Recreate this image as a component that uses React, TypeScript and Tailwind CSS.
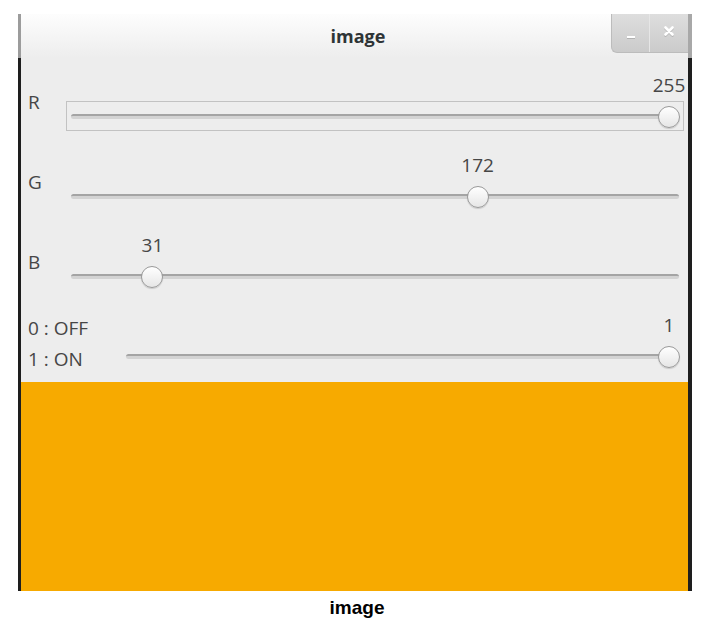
const UI_FONT = { fontFamily: '"Open Sans", "DejaVu Sans", sans-serif' }

type ScaleProps = {
  value: number
  max: number
  boxed?: boolean
}

// GTK-style horizontal scale: value drawn above the knob, track below.
function Scale({ value, max, boxed = false }: ScaleProps) {
  const frac = value / max
  return (
    <div className="flex flex-1 flex-col">
      <div className="relative h-[27px]">
        <span
          className="absolute -top-[1px] -translate-x-1/2 text-[19px] leading-[24px] text-[#464646]"
          style={{ left: `calc(15px + (100% - 30px) * ${frac})` }}
        >
          {value}
        </span>
      </div>
      <div
        className={`flex h-[30px] items-center border px-[4px] ${
          boxed ? 'border-[#c2c2c2]' : 'border-transparent'
        }`}
      >
        <div className="relative h-[5px] w-full rounded-full border-t-2 border-[#a4a4a4] bg-[#d3d3d3]">
          <span
            className="absolute top-1/2 h-[22px] w-[22px] -translate-x-1/2 -translate-y-1/2 rounded-full border border-[#9a9a9a] bg-gradient-to-b from-white to-[#e6e6e6] shadow-[0_1px_1px_rgba(0,0,0,0.15)]"
            style={{ left: `calc(10px + (100% - 20px) * ${frac})` }}
          />
        </div>
      </div>
    </div>
  )
}

function ChannelRow({ label, value }: { label: string; value: number }) {
  return (
    <div className="flex h-[57px] items-center">
      <div className="w-[38px] text-[19px] text-[#464646]">{label}</div>
      <Scale value={value} max={255} boxed={label === 'R'} />
    </div>
  )
}

export default function App() {
  return (
    <div className="min-h-screen bg-white pl-[18px] pt-[14px]">
      <div className="flex w-[674px] flex-col" style={UI_FONT}>
        <div className="grid h-[44px] grid-cols-[1fr_auto_1fr] border-l-[3px] border-r-[4px] border-l-[#9c9c9c] border-r-[#a8a8a8] bg-gradient-to-b from-[#fdfdfd] to-[#ededed]">
          <div />
          <div className="ml-[7px] self-center text-[18px] font-bold text-[#2e3436]">image</div>
          <div className="flex justify-end">
            <div className="flex h-[39px] overflow-hidden rounded-bl-[6px] border-b border-l border-[#bcbcbc] bg-gradient-to-b from-[#dedede] to-[#cbcbcb]">
              <button type="button" className="flex w-[38px] items-center justify-center border-r border-[#e6e6e6] pt-[8px]">
                <span className="h-[2px] w-[8px] bg-white shadow-[0_1px_0_rgba(0,0,0,0.15)]" />
              </button>
              <button type="button" className="flex w-[38px] items-center justify-center pb-[4px]">
                <svg width="10" height="10" viewBox="0 0 10 10" className="drop-shadow-[0_1px_0_rgba(0,0,0,0.15)]">
                  <path d="M1.5 1.5 L8.5 8.5 M8.5 1.5 L1.5 8.5" stroke="white" strokeWidth="2.6" strokeLinecap="round" />
                </svg>
              </button>
            </div>
          </div>
        </div>

        <div className="flex flex-col border-l-[3px] border-r-[4px] border-[#1e1e1e]">
          <div className="flex flex-col gap-[23px] bg-[#ededed] pb-[11px] pl-[7px] pr-[4px] pt-[16px]">
            <ChannelRow label="R" value={255} />
            <ChannelRow label="G" value={172} />
            <ChannelRow label="B" value={31} />
            <div className="flex h-[57px] items-center">
              <div className="flex w-[93px] flex-col pt-[2px] text-[19px] leading-[31px] text-[#464646]">
                <span>0 : OFF</span>
                <span>1 : ON</span>
              </div>
              <Scale value={1} max={1} />
            </div>
          </div>

          <div className="h-[209px] bg-[#f7aa00]" />
        </div>
      </div>
      <div
        className="w-[674px] pl-[4px] pt-[3px] text-center text-[19px] font-bold text-black"
        style={{ fontFamily: '"Liberation Sans", Arial, sans-serif' }}
      >
        image
      </div>
    </div>
  )
}
